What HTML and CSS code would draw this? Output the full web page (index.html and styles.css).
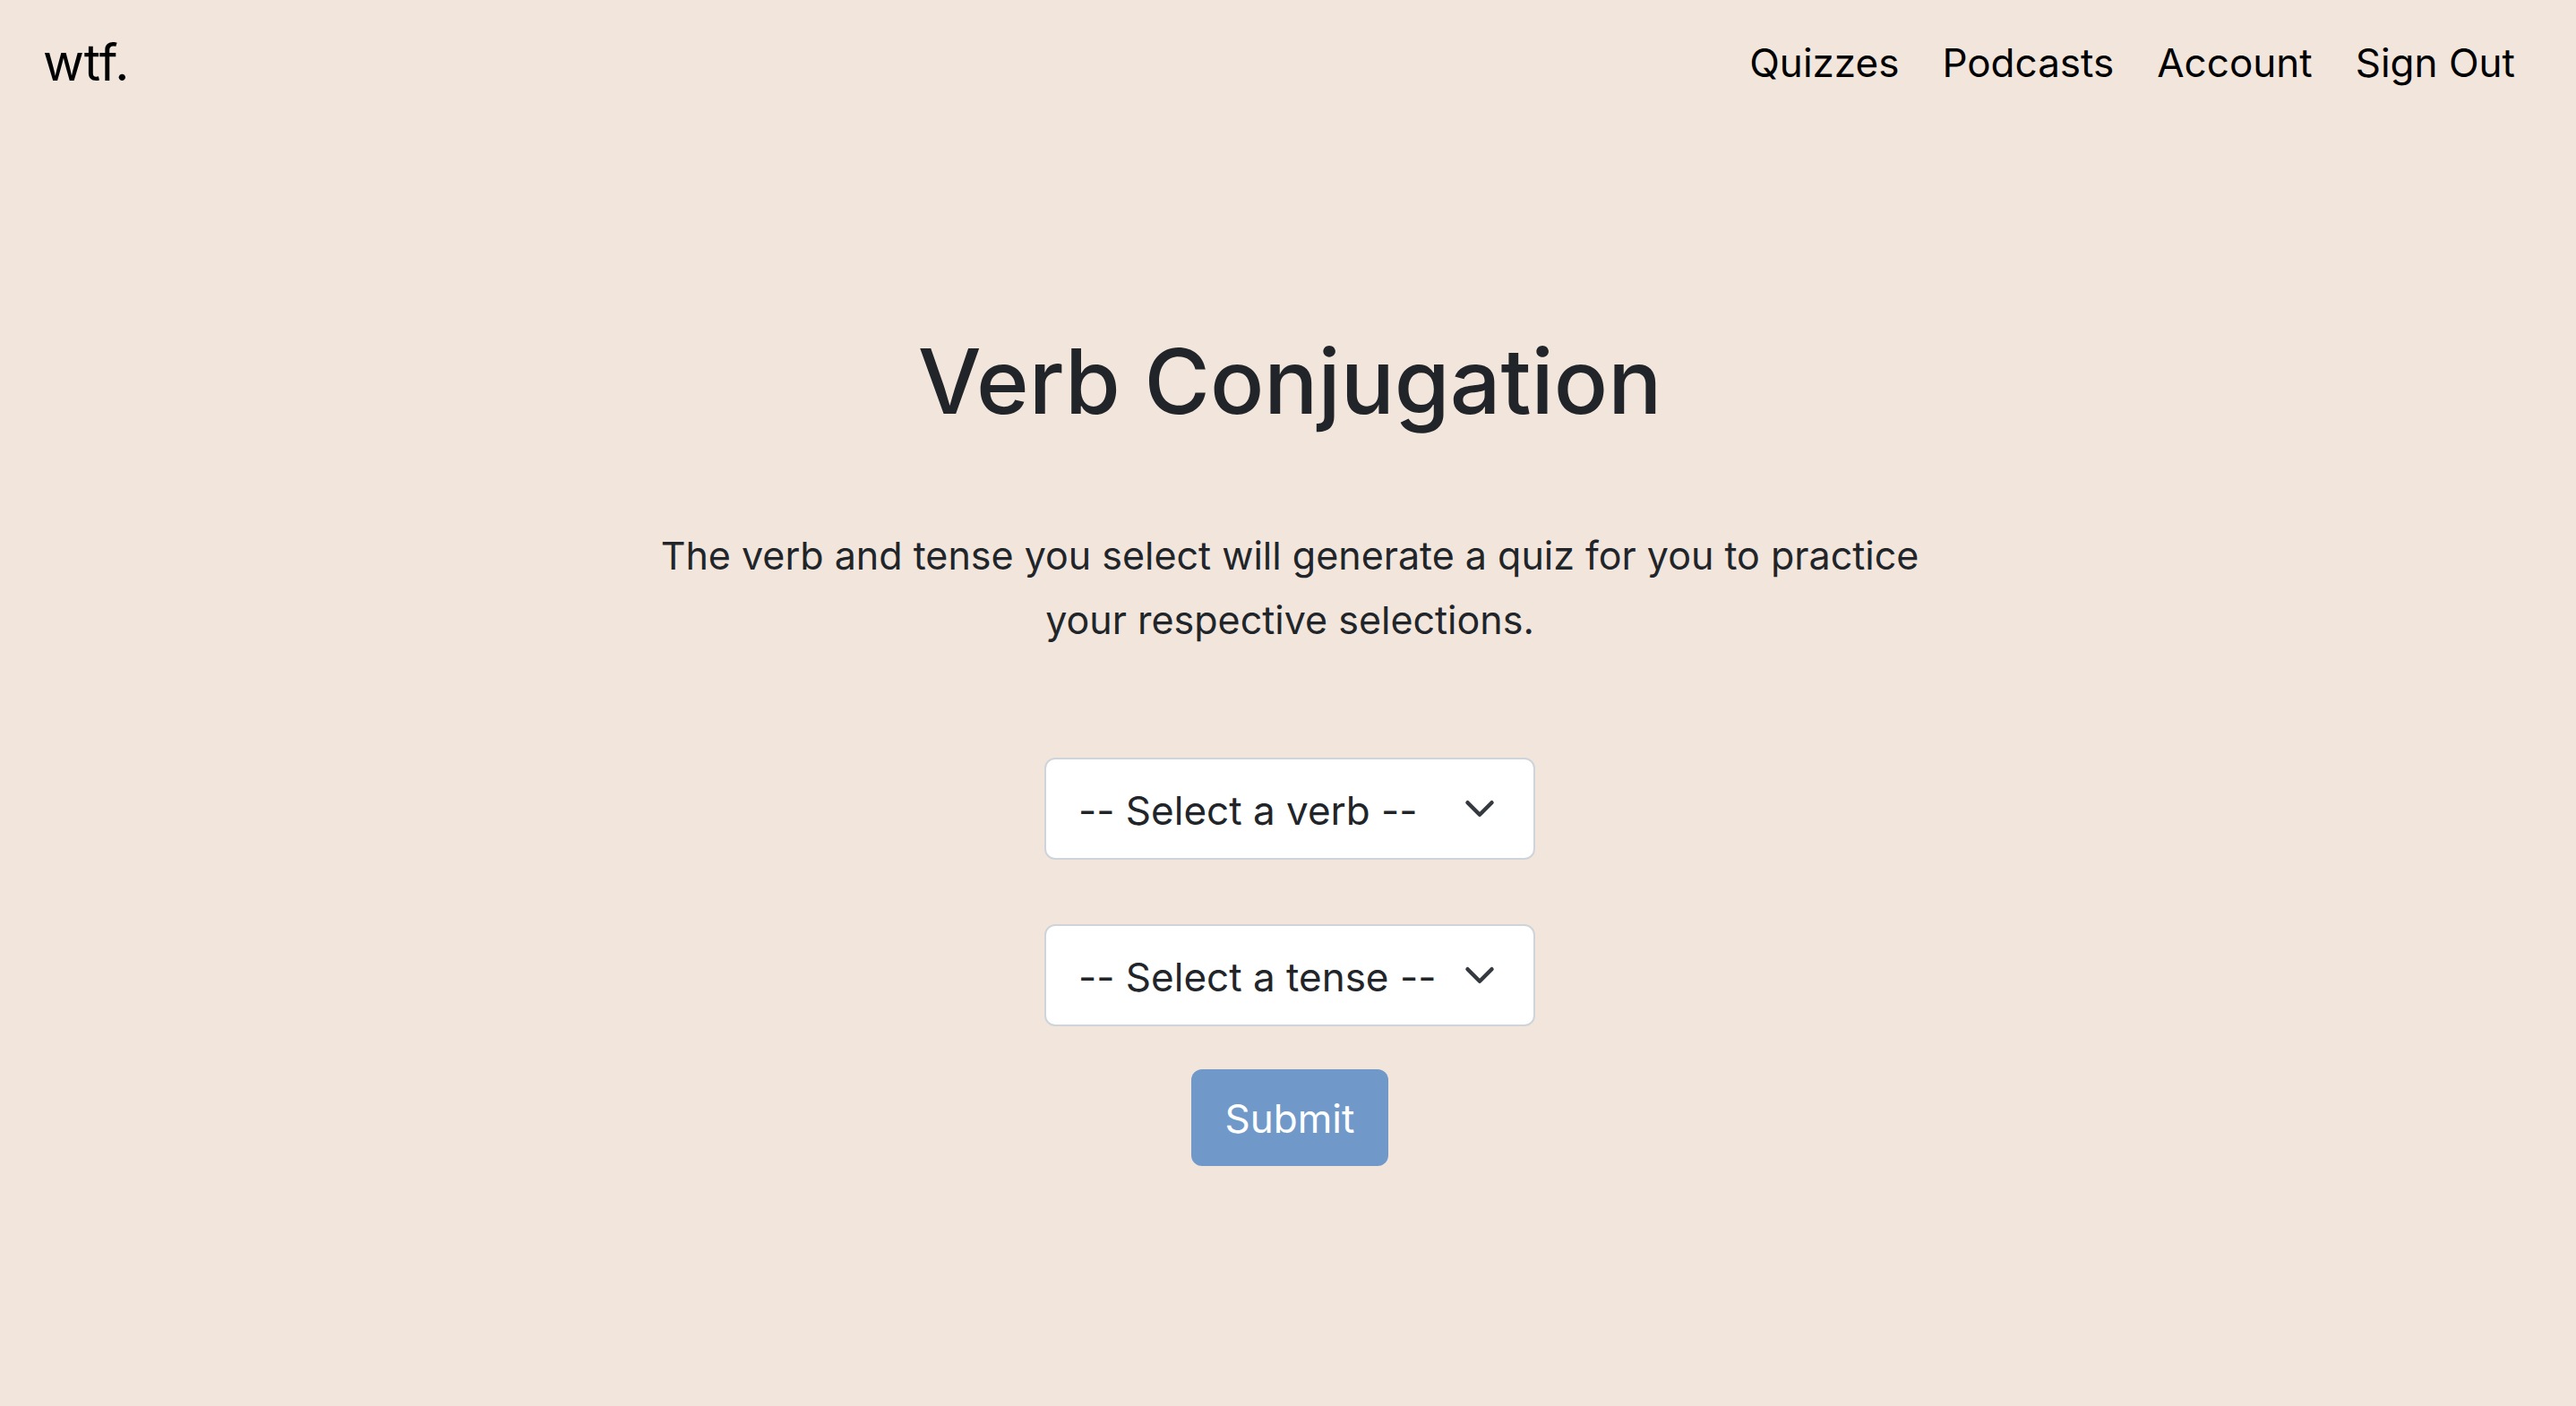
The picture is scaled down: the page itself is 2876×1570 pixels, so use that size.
FILE: index.html
```html
<!DOCTYPE html>
<html lang="en">
<head>
<meta charset="utf-8">
<title>Verb Conjugation</title>
<link rel="stylesheet" href="styles.css">
</head>
<body>
<header class="navbar">
  <a class="brand" href="#">wtf.</a>
  <nav class="nav-links">
    <a href="#">Quizzes</a>
    <a href="#">Podcasts</a>
    <a href="#">Account</a>
    <a href="#">Sign Out</a>
  </nav>
</header>
<main class="quiz">
  <h1 class="title">Verb Conjugation</h1>
  <p class="intro">The verb and tense you select will generate a quiz for you to practice your respective selections.</p>
  <form class="quiz-form">
    <div class="field">
      <select class="select" aria-label="Verb"><option>-- Select a verb --</option></select>
      <svg class="chevron" viewBox="0 0 16 16" aria-hidden="true"><path d="m2 5 6 6 6-6"/></svg>
    </div>
    <div class="field">
      <select class="select" aria-label="Tense"><option>-- Select a tense --</option></select>
      <svg class="chevron" viewBox="0 0 16 16" aria-hidden="true"><path d="m2 5 6 6 6-6"/></svg>
    </div>
    <button class="submit" type="submit">Submit</button>
  </form>
</main>
</body>
</html>
```
FILE: styles.css
```css
* {
  box-sizing: border-box;
}

body {
  margin: 0;
  background: #f2e6dc;
  color: #212529;
  font-family: Inter, "Liberation Sans", sans-serif;
  font-size: 44px;
  line-height: 72px;
}

.navbar {
  display: flex;
  justify-content: space-between;
  align-items: center;
  padding: 34px 68px 32px 48px;
}

.navbar a {
  color: #000;
  text-decoration: none;
}

.brand {
  font-size: 56px;
}

.nav-links {
  display: flex;
  gap: 48px;
}

.quiz {
  display: flex;
  flex-direction: column;
  align-items: center;
  padding: 224px 46px 48px 50px;
}

.title {
  margin: 0;
  font-size: 100px;
  font-weight: 500;
  line-height: 128px;
}

.intro {
  max-width: 1440px;
  margin: 94px 0 118px;
  font-size: 43px;
  text-align: center;
}

.quiz-form {
  display: flex;
  flex-direction: column;
  align-items: center;
}

.field {
  display: grid;
  align-items: center;
  width: 548px;
  margin-bottom: 72px;
}

.field + .submit {
  margin-top: -24px;
}

.select,
.chevron {
  grid-area: 1 / 1;
}

.select {
  appearance: none;
  width: 100%;
  height: 114px;
  padding: 4px 36px 0;
  border: 2px solid #ced4da;
  border-radius: 12px;
  background: #fff;
  color: #212529;
  font: inherit;
  font-feature-settings: "calt" 0;
}

.chevron {
  justify-self: end;
  width: 36px;
  margin-right: 44px;
  fill: none;
  stroke: #343a40;
  stroke-width: 2;
  stroke-linecap: round;
  stroke-linejoin: round;
  pointer-events: none;
}

.submit {
  height: 108px;
  padding: 2px 38px 0;
  border: 0;
  border-radius: 12px;
  background: #7099ca;
  color: #fff;
  font: inherit;
}
```
